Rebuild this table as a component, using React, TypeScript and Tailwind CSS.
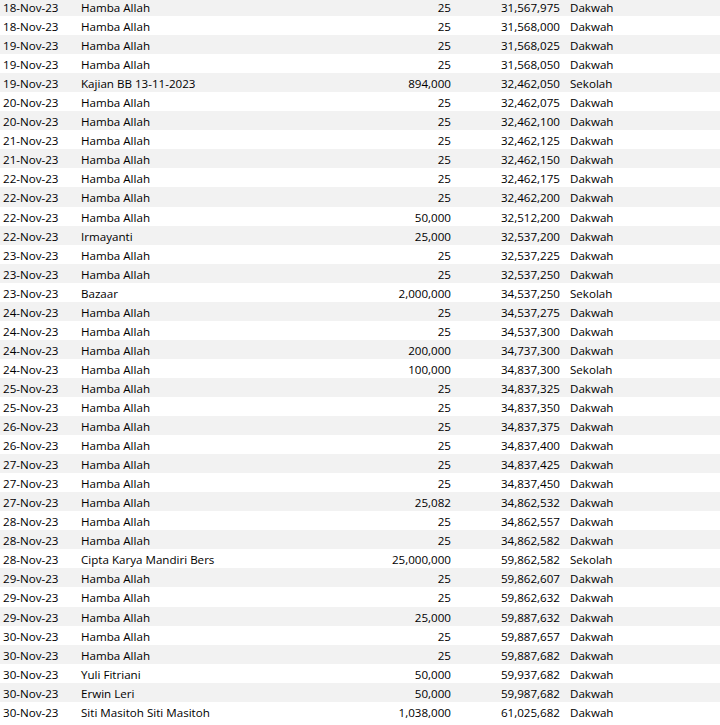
import React from 'react';

type Row = [string, string, string, string, string];

const rows: Row[] = [
  ['18-Nov-23', 'Hamba Allah', '25', '31,567,975', 'Dakwah'],
  ['18-Nov-23', 'Hamba Allah', '25', '31,568,000', 'Dakwah'],
  ['19-Nov-23', 'Hamba Allah', '25', '31,568,025', 'Dakwah'],
  ['19-Nov-23', 'Hamba Allah', '25', '31,568,050', 'Dakwah'],
  ['19-Nov-23', 'Kajian BB 13-11-2023', '894,000', '32,462,050', 'Sekolah'],
  ['20-Nov-23', 'Hamba Allah', '25', '32,462,075', 'Dakwah'],
  ['20-Nov-23', 'Hamba Allah', '25', '32,462,100', 'Dakwah'],
  ['21-Nov-23', 'Hamba Allah', '25', '32,462,125', 'Dakwah'],
  ['21-Nov-23', 'Hamba Allah', '25', '32,462,150', 'Dakwah'],
  ['22-Nov-23', 'Hamba Allah', '25', '32,462,175', 'Dakwah'],
  ['22-Nov-23', 'Hamba Allah', '25', '32,462,200', 'Dakwah'],
  ['22-Nov-23', 'Hamba Allah', '50,000', '32,512,200', 'Dakwah'],
  ['22-Nov-23', 'Irmayanti', '25,000', '32,537,200', 'Dakwah'],
  ['23-Nov-23', 'Hamba Allah', '25', '32,537,225', 'Dakwah'],
  ['23-Nov-23', 'Hamba Allah', '25', '32,537,250', 'Dakwah'],
  ['23-Nov-23', 'Bazaar', '2,000,000', '34,537,250', 'Sekolah'],
  ['24-Nov-23', 'Hamba Allah', '25', '34,537,275', 'Dakwah'],
  ['24-Nov-23', 'Hamba Allah', '25', '34,537,300', 'Dakwah'],
  ['24-Nov-23', 'Hamba Allah', '200,000', '34,737,300', 'Dakwah'],
  ['24-Nov-23', 'Hamba Allah', '100,000', '34,837,300', 'Sekolah'],
  ['25-Nov-23', 'Hamba Allah', '25', '34,837,325', 'Dakwah'],
  ['25-Nov-23', 'Hamba Allah', '25', '34,837,350', 'Dakwah'],
  ['26-Nov-23', 'Hamba Allah', '25', '34,837,375', 'Dakwah'],
  ['26-Nov-23', 'Hamba Allah', '25', '34,837,400', 'Dakwah'],
  ['27-Nov-23', 'Hamba Allah', '25', '34,837,425', 'Dakwah'],
  ['27-Nov-23', 'Hamba Allah', '25', '34,837,450', 'Dakwah'],
  ['27-Nov-23', 'Hamba Allah', '25,082', '34,862,532', 'Dakwah'],
  ['28-Nov-23', 'Hamba Allah', '25', '34,862,557', 'Dakwah'],
  ['28-Nov-23', 'Hamba Allah', '25', '34,862,582', 'Dakwah'],
  ['28-Nov-23', 'Cipta Karya Mandiri Bers', '25,000,000', '59,862,582', 'Sekolah'],
  ['29-Nov-23', 'Hamba Allah', '25', '59,862,607', 'Dakwah'],
  ['29-Nov-23', 'Hamba Allah', '25', '59,862,632', 'Dakwah'],
  ['29-Nov-23', 'Hamba Allah', '25,000', '59,887,632', 'Dakwah'],
  ['30-Nov-23', 'Hamba Allah', '25', '59,887,657', 'Dakwah'],
  ['30-Nov-23', 'Hamba Allah', '25', '59,887,682', 'Dakwah'],
  ['30-Nov-23', 'Yuli Fitriani', '50,000', '59,937,682', 'Dakwah'],
  ['30-Nov-23', 'Erwin Leri', '50,000', '59,987,682', 'Dakwah'],
  ['30-Nov-23', 'Siti Masitoh Siti Masitoh', '1,038,000', '61,025,682', 'Dakwah'],
];

export default function App() {
  return (
    <div className="w-[720px] h-[725px] overflow-hidden bg-white text-black font-['Open_Sans',sans-serif] text-[11.6px]">
      <div className="-mt-[3px] flex flex-col">
        {rows.map(([date, name, amount, balance, cat], i) => (
          <div
            key={i}
            className={`flex h-[19.054px] leading-[19px] pt-[1px] whitespace-nowrap ${
              i % 2 === 0 ? 'bg-[#f2f2f2]' : 'bg-white'
            }`}
          >
            <div className="w-[78px] pl-[3px]">{date}</div>
            <div className="w-[293px] pl-[3px]">{name}</div>
            <div className="w-[84px] pr-[4px] text-right">{amount}</div>
            <div className="w-[109px] pr-[4px] text-right">{balance}</div>
            <div className="pl-[6px]">{cat}</div>
          </div>
        ))}
      </div>
    </div>
  );
}
